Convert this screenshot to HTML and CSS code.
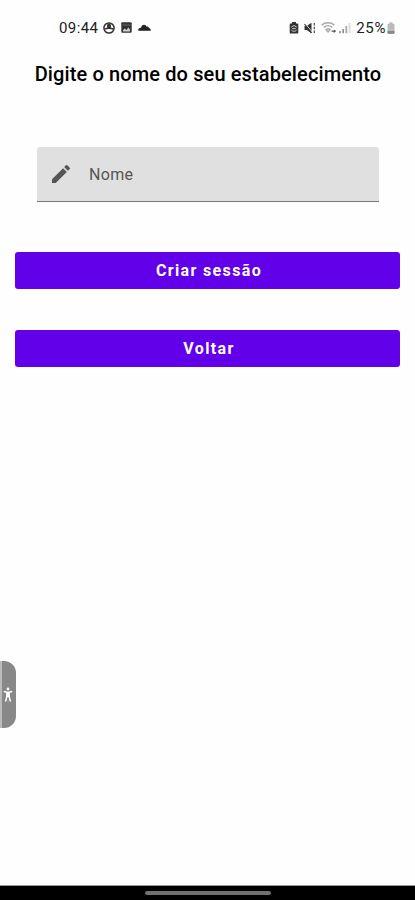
FILE: index.html
```html
<!DOCTYPE html>
<html lang="pt-BR">
<head>
    <meta charset="UTF-8">
    <meta name="viewport" content="width=device-width, initial-scale=1.0">
    <title>Criar sessão</title>
    <link rel="stylesheet" href="styles.css">
</head>
<body>

    <!-- Status bar -->
    <header class="status-bar">
        <div class="status-left">
            <span class="clock">09:44</span>
            <svg class="icon-person" width="12" height="12" viewBox="0 0 12 12">
                <circle cx="6" cy="6" r="5.1" fill="none" stroke="#333" stroke-width="1.5"/>
                <rect x="4" y="1.8" width="4" height="4.6" rx="1.6" fill="#333"/>
                <path d="M1.5 7.2c2-1.4 7-1.4 9 0" fill="none" stroke="#333" stroke-width="1.5"/>
            </svg>
            <svg class="icon-image" width="11" height="11" viewBox="0 0 11 11">
                <rect x="0.3" y="0.3" width="10.4" height="10.4" rx="1" fill="#333"/>
                <path d="M1.6 3h7.8" stroke="#777" stroke-width="0.8"/>
                <path d="M2 9.4V8l1.8-1.4L5.4 8l2-2.4L9 7.4v2z" fill="#ccc"/>
            </svg>
            <svg class="icon-cloud" width="13" height="7" viewBox="0 0 13 7">
                <path d="M0.2 6.7C0.2 4.6 1.6 3.6 3 3.9 3.4 0 7.8-0.4 8.5 2.7c1.4-.4 2.2.3 2.4 1.4 1.2.1 1.9 1.1 1.9 2.6z" fill="#222"/>
            </svg>
        </div>
        <div class="status-right">
            <svg class="icon-saver" width="10" height="12" viewBox="0 0 10 12">
                <path d="M3 0h4v1.4h1.2c.7 0 1.1.4 1.1 1.1v8c0 .7-.4 1.1-1.1 1.1H1.8c-.7 0-1.1-.4-1.1-1.1v-8c0-.7.4-1.1 1.1-1.1H3z" fill="#333"/>
                <path d="M2.2 5.2L5 3.5l2.8 1.7M2.3 7.8C3.4 9.8 6.6 9.8 7.7 7.8M3.2 6.6h3.6" fill="none" stroke="#ddd" stroke-width="0.9"/>
            </svg>
            <svg class="icon-mute" width="12" height="12" viewBox="0 0 12 12">
                <path d="M0.5 4h2.2L7.5 0.8v10.4L2.7 8H.5z" fill="#333"/>
                <path d="M1.2 1.6l7 8.4" stroke="#fff" stroke-width="0.9"/>
                <path d="M0.5 2l7 8.8" stroke="#333" stroke-width="1.1"/>
                <path d="M10.3 1v2.4M10.3 4.8v2.4M10.3 8.6V11" stroke="#555" stroke-width="1.3"/>
            </svg>
            <svg class="icon-wifi" width="17" height="12" viewBox="0 0 17 12">
                <g fill="none" stroke="#aaa" stroke-width="1.4">
                    <path d="M0.7 3.1c3.7-3.1 9-3.1 12.7 0"/>
                    <path d="M2.8 5.4c2.5-2.1 6-2.1 8.5 0"/>
                    <path d="M4.9 7.5c1.3-1 3-1 4.3 0L7.1 10z"/>
                </g>
                <path d="M10.5 9.2h4.4" stroke="#777" stroke-width="1.4"/>
                <path d="M13.3 7.9v2.6" stroke="#555" stroke-width="1.4"/>
            </svg>
            <svg class="icon-signal" width="12" height="12" viewBox="0 0 12 12">
                <path d="M1 9v2.3M4.2 7v4.3" stroke="#888" stroke-width="1.5"/>
                <path d="M7.3 4v7.3" stroke="#aaa" stroke-width="1.9"/>
                <path d="M10.6 1v10.3" stroke="#ddd" stroke-width="1.9"/>
            </svg>
            <span class="battery-level">25%</span>
            <svg class="icon-battery" width="8" height="12" viewBox="0 0 8 12">
                <path d="M2.5 0.3h3v1.4h1c.6 0 1 .4 1 1v8c0 .6-.4 1-1 1h-5c-.6 0-1-.4-1-1v-8c0-.6.4-1 1-1h1z" fill="#bbb"/>
                <path d="M0.5 9h7v1.7c0 .6-.4 1-1 1h-5c-.6 0-1-.4-1-1z" fill="#888"/>
            </svg>
        </div>
    </header>

    <!-- Session form -->
    <main class="content">
        <h1>Digite o nome do seu estabelecimento</h1>

        <div class="text-field">
            <svg class="icon-edit" width="24" height="24" viewBox="0 0 24 24">
                <path d="M3 17.25V21h3.75L17.81 9.94l-3.75-3.75L3 17.25zM20.71 7.04a1 1 0 0 0 0-1.41l-2.34-2.34a1 1 0 0 0-1.41 0l-1.83 1.83 3.75 3.75 1.83-1.83z" fill="#555"/>
            </svg>
            <span class="field-label">Nome</span>
        </div>

        <button class="btn btn-create" type="button">Criar sessão</button>
        <button class="btn btn-back" type="button">Voltar</button>
    </main>

    <!-- Accessibility handle over the left edge -->
    <div class="side-handle">
        <svg width="10" height="16" viewBox="0 0 10 16">
            <circle cx="5" cy="2" r="1.4" fill="#fff"/>
            <path d="M0.8 4.6L5 5.4l4.2-.8M5 5v5M3.9 5.4v4L2.6 14.5M6.1 5.4v4l1.3 5.1" fill="none" stroke="#fff" stroke-width="1.5"/>
        </svg>
    </div>

    <!-- Navigation bar -->
    <footer class="nav-bar">
        <div class="nav-pill"></div>
    </footer>

</body>
</html>
```
FILE: styles.css
```css
/* styles.css */

* {
    box-sizing: border-box;
}

body {
    font-family: Roboto, "Liberation Sans", sans-serif;
    background-color: #fefefe;
    color: #111;
    margin: 0;
    height: 900px;
    display: flex;
    flex-direction: column;
    overflow: hidden;
}

/* Status bar */
.status-bar {
    display: flex;
    justify-content: space-between;
    align-items: center;
    height: 55px;
    padding: 0 20px 0 59px;
    font-size: 15px;
    color: #222;
}

.status-left,
.status-right {
    display: flex;
    align-items: center;
}

.status-bar svg {
    flex: none;
}

.clock {
    letter-spacing: 0.4px;
    margin-right: 5px;
}

.icon-person {
    margin-right: 6px;
}

.icon-image {
    margin-right: 6px;
}

.icon-saver {
    margin-right: 5px;
}

.icon-mute {
    margin-right: 5px;
}

.icon-wifi {
    margin-right: 1px;
}

.icon-signal {
    margin-right: 5px;
}

.battery-level {
    letter-spacing: 0.6px;
    margin-right: 1px;
}

/* Form */
.content {
    flex: 1;
    display: flex;
    flex-direction: column;
    padding: 0 15px;
}

h1 {
    margin: 7px 0 0 1px;
    font-size: 20px;
    font-weight: 500;
    line-height: 24px;
    letter-spacing: 0.12px;
    text-align: center;
    white-space: nowrap;
    color: #000;
}

.text-field {
    display: flex;
    align-items: center;
    height: 55px;
    margin: 61px 21px 0 22px;
    padding: 0 12px;
    background-color: #e0e0e0;
    border-bottom: 1px solid #777;
    border-radius: 3px 3px 0 0;
}

.field-label {
    margin-left: 16px;
    font-size: 16px;
    letter-spacing: 0.3px;
    color: #555;
}

.btn {
    height: 37px;
    padding: 0 0 0 3px;
    border: none;
    border-radius: 3px;
    background-color: #6200ea;
    color: #fff;
    font-family: inherit;
    font-size: 16px;
    font-weight: 700;
    letter-spacing: 1.35px;
}

.btn-create {
    margin-top: 50px;
}

.btn-back {
    margin-top: 41px;
}

/* Accessibility handle */
.side-handle {
    position: absolute;
    left: 0;
    top: 661px;
    width: 16px;
    height: 67px;
    display: flex;
    align-items: center;
    padding-left: 1px;
    background-color: #888;
    border-left: 2px solid #bbb;
    border-radius: 0 12px 12px 0;
}

/* Navigation bar */
.nav-bar {
    display: flex;
    justify-content: center;
    height: 15px;
    padding-top: 5px;
    background-color: #000;
    border-top: 1px solid #999;
}

.nav-pill {
    width: 126px;
    height: 4px;
    border-radius: 2px;
    background-color: #707070;
}
```
